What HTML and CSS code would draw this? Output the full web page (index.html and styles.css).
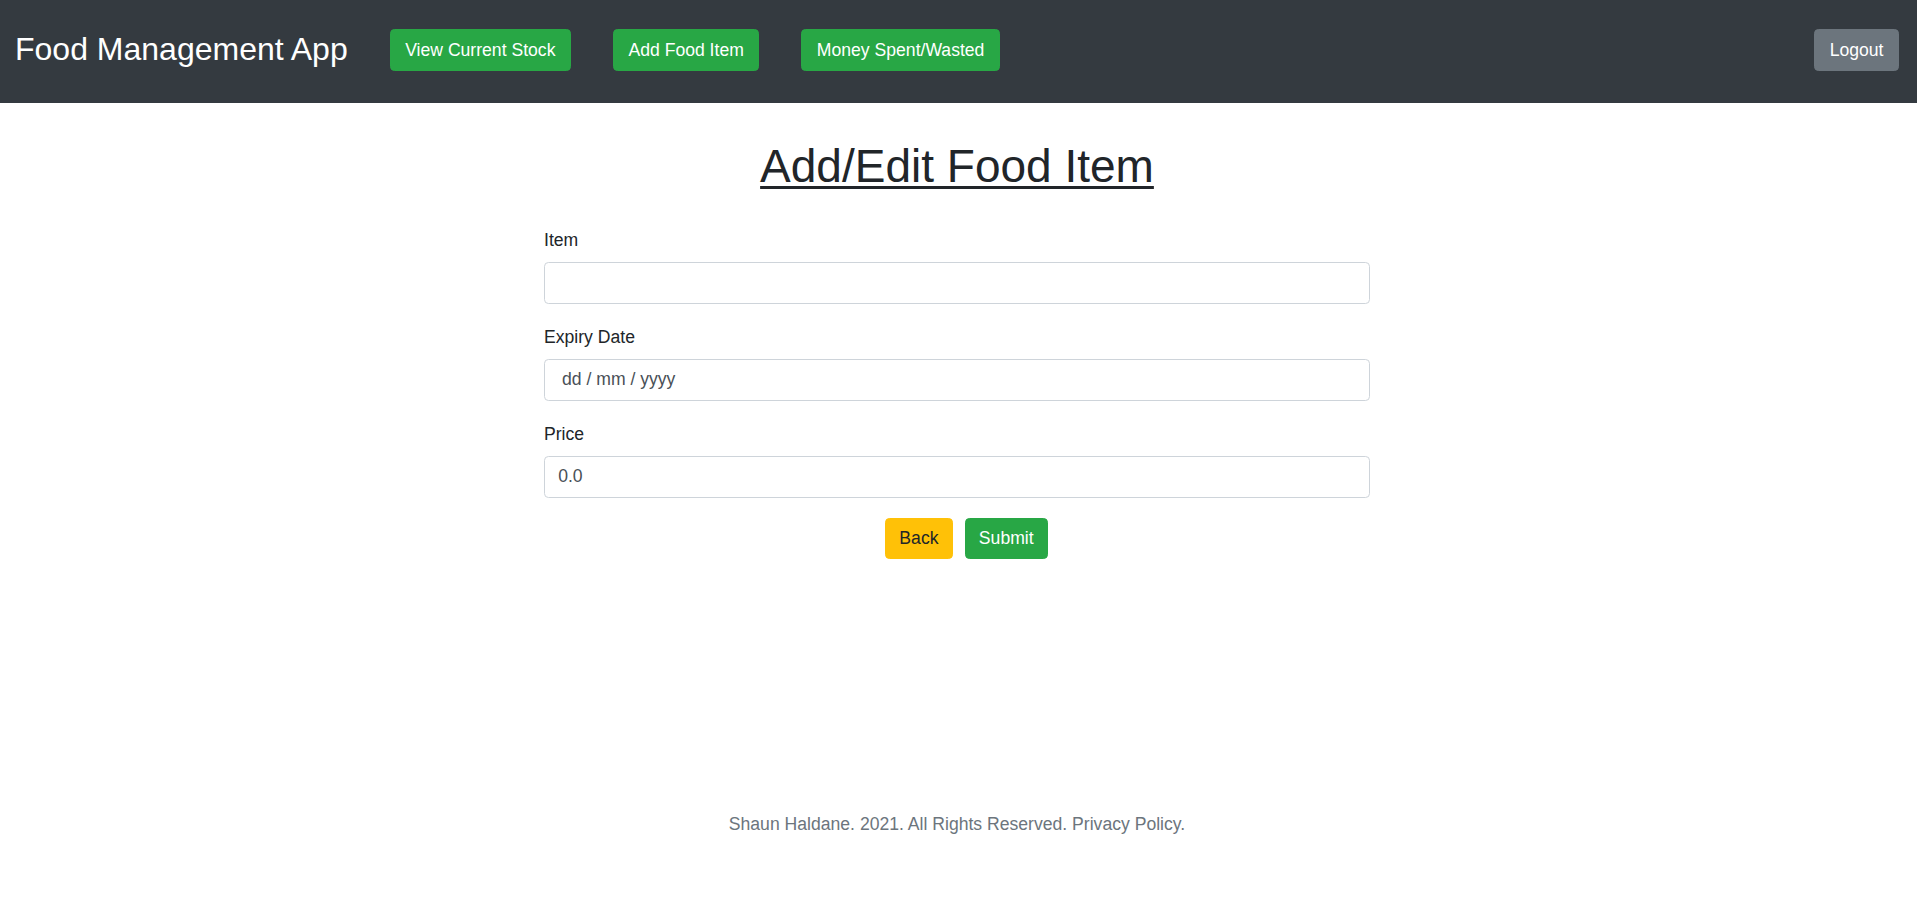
FILE: index.html
```html
<!DOCTYPE html>
<html lang="en">
<head>
<meta charset="utf-8">
<title>Food Management App</title>
<link rel="stylesheet" href="styles.css">
</head>
<body>
<nav class="navbar">
  <span class="brand">Food Management App</span>
  <a class="btn btn-success nav-btn" href="#">View Current Stock</a>
  <a class="btn btn-success nav-btn" href="#">Add Food Item</a>
  <a class="btn btn-success nav-btn" href="#">Money Spent/Wasted</a>
  <a class="btn btn-secondary nav-btn logout" href="#">Logout</a>
</nav>
<main class="content">
  <h1 class="page-title">Add/Edit Food Item</h1>
  <form class="food-form">
    <div class="field">
      <label class="field-label" for="item">Item</label>
      <input class="control" id="item" type="text">
    </div>
    <div class="field">
      <label class="field-label" for="expiry">Expiry Date</label>
      <input class="control control-date" id="expiry" type="text" placeholder="dd / mm / yyyy">
    </div>
    <div class="field">
      <label class="field-label" for="price">Price</label>
      <input class="control" id="price" type="text" value="0.0">
    </div>
    <div class="actions">
      <button class="btn btn-warning" type="button">Back</button>
      <button class="btn btn-success" type="button">Submit</button>
    </div>
  </form>
</main>
<footer class="footer">Shaun Haldane. 2021. All Rights Reserved. Privacy Policy.</footer>
</body>
</html>
```
FILE: styles.css
```css
html, body {
  height: 100%;
}

body {
  margin: 0;
  font-family: "Liberation Sans", Arial, sans-serif;
  font-size: 17.6px;
  line-height: 1.5;
  color: #212529;
  background: #fff;
  display: flex;
  flex-direction: column;
  min-height: 100vh;
}

.navbar {
  display: flex;
  align-items: center;
  gap: 42px;
  height: 103px;
  box-sizing: border-box;
  padding: 0 18px 3px 15px;
  background: #343a40;
  flex-shrink: 0;
}

.brand {
  font-size: 32px;
  line-height: 1.2;
  color: #fff;
  margin-bottom: 2px;
}

.btn {
  display: inline-block;
  padding: 6.6px 13.2px;
  border: 1px solid transparent;
  border-radius: 4.4px;
  font-family: inherit;
  font-size: 17.6px;
  line-height: 1.5;
  text-decoration: none;
  cursor: pointer;
  white-space: nowrap;
}

.nav-btn {
  padding-left: 14.5px;
  padding-right: 14.5px;
}

.btn-success {
  background: #28a745;
  border-color: #28a745;
  color: #fff;
}

.btn-secondary {
  background: #6c757d;
  border-color: #6c757d;
  color: #fff;
}

.btn-warning {
  background: #ffc107;
  border-color: #ffc107;
  color: #212529;
}

.logout {
  margin-left: auto;
}

.content {
  flex: 1;
  padding: 36px 3px 0 0;
}

.page-title {
  margin: 0 0 32.5px;
  font-size: 46px;
  font-weight: 400;
  line-height: 1.2;
  text-align: center;
  text-decoration: underline;
  text-decoration-thickness: 3px;
  text-underline-offset: 4px;
}

.food-form {
  width: 826px;
  margin: 0 auto;
}

.field {
  margin-bottom: 19.8px;
}

.field-label {
  display: block;
  margin-bottom: 8.8px;
}

.control {
  display: block;
  width: 100%;
  height: 42px;
  box-sizing: border-box;
  padding: 6.6px 13.2px;
  font-family: inherit;
  font-size: 17.6px;
  line-height: 1.5;
  color: #495057;
  background: #fff;
  border: 1px solid #ced4da;
  border-radius: 4.4px;
  outline: none;
}

.control-date {
  padding-left: 17px;
}

.control-date::placeholder {
  color: #495057;
  opacity: 1;
}

.actions {
  display: flex;
  justify-content: center;
  gap: 12px;
  padding-left: 19px;
}

.footer {
  text-align: center;
  color: #6c757d;
  padding: 0 3px 64px 0;
  flex-shrink: 0;
}
```
